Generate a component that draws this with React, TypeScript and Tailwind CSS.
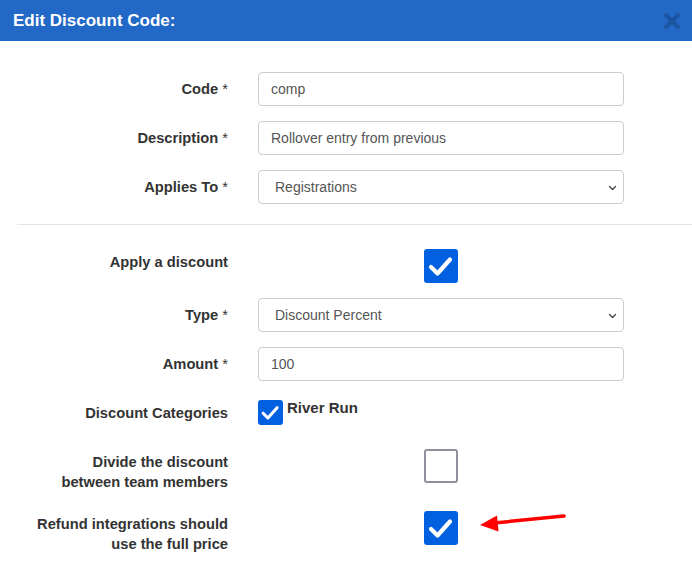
import React from "react";

// Edit Discount Code modal — form rows with right-aligned labels.

function Check({ size = 34 }: { size?: number }) {
  return (
    <span
      className="flex items-center justify-center rounded-[3px] bg-[#0060df]"
      style={{ width: size, height: size }}
    >
      <svg width={size} height={size} viewBox="0 0 34 34" fill="none">
        <path
          d="M7 18 L13.5 24.5 L26 10.5"
          stroke="#fff"
          strokeWidth="4.2"
          strokeLinecap="round"
          strokeLinejoin="round"
        />
      </svg>
    </span>
  );
}

function Empty() {
  return <span className="block h-[34px] w-[34px] rounded-[3px] border-2 border-[#8f8f9d] bg-white" />;
}

function Label({ children, pt = "pt-[7px]", req }: { children: React.ReactNode; pt?: string; req?: boolean }) {
  return (
    <div className={`w-[228px] shrink-0 text-right text-[14.7px] font-bold leading-[20px] text-[#333] ${pt}`}>
      {children}
      {req && <span className="font-normal"> *</span>}
    </div>
  );
}

function Chevron() {
  return (
    <svg className="pointer-events-none absolute right-[6px] top-[13px]" width="9" height="8" viewBox="0 0 9 8" fill="none">
      <path d="M1.5 2.5 L4.5 5.5 L7.5 2.5" stroke="#444" strokeWidth="1.3" strokeLinecap="round" strokeLinejoin="round" />
    </svg>
  );
}

function TextField({ value }: { value: string }) {
  return (
    <div className="flex h-[34px] w-[366px] items-center rounded-[4px] border border-[#ccc] bg-white px-3 text-[14px] text-[#555]">
      {value}
    </div>
  );
}

function SelectField({ value }: { value: string }) {
  return (
    <div className="relative flex h-[34px] w-[366px] items-center rounded-[4px] border border-[#ccc] bg-white pl-4 text-[14px] text-[#555]">
      {value}
      <Chevron />
    </div>
  );
}

export default function App() {
  return (
    <div className="relative h-[573px] w-[692px] overflow-hidden bg-white font-['Liberation_Sans',Arial,sans-serif]">
      <div className="flex h-[41px] items-center justify-between bg-[#2268c6] pl-[13px] pr-[11px]">
        <span className="text-[17px] font-bold text-white">Edit Discount Code:</span>
        <svg width="18" height="18" viewBox="0 0 18 18" fill="none">
          <path d="M3 3 L15 15 M15 3 L3 15" stroke="#1b54a3" strokeWidth="4" strokeLinecap="round" />
        </svg>
      </div>

      <div className="pt-[31px]">
        <div className="mb-[15px] flex gap-[30px]">
          <Label req>Code</Label>
          <TextField value="comp" />
        </div>
        <div className="mb-[15px] flex gap-[30px]">
          <Label req>Description</Label>
          <TextField value="Rollover entry from previous" />
        </div>
        <div className="flex gap-[30px]">
          <Label req>Applies To</Label>
          <SelectField value="Registrations" />
        </div>

        <div className="ml-[17px] mt-[20px] mb-[24px] border-t border-[#e5e5e5]" />

        <div className="mb-[15px] flex gap-[30px]">
          <Label pt="pt-[3px]">Apply a discount</Label>
          <div className="flex w-[366px] justify-center">
            <Check />
          </div>
        </div>
        <div className="mb-[15px] flex gap-[30px]">
          <Label req>Type</Label>
          <SelectField value="Discount Percent" />
        </div>
        <div className="mb-[15px] flex gap-[30px]">
          <Label req>Amount</Label>
          <TextField value="100" />
        </div>
        <div className="flex h-[38px] gap-[30px]">
          <Label>Discount Categories</Label>
          <div className="flex items-start gap-[4px] pt-[4px]">
            <Check size={25} />
            <span className="-mt-[2px] text-[15px] font-bold leading-[20px] text-[#333]">River Run</span>
          </div>
        </div>
        <div className="mt-[15px] flex gap-[30px]">
          <Label pt="pt-[3px]">
            Divide the discount
            <br />
            between team members
          </Label>
          <div className="flex w-[366px] justify-center">
            <Empty />
          </div>
        </div>
        <div className="mt-[19px] flex gap-[30px]">
          <Label pt="pt-[3px]">
            Refund integrations should
            <br />
            use the full price
          </Label>
          <div className="flex w-[366px] justify-center">
            <Check />
          </div>
        </div>
      </div>

      {/* red annotation arrow */}
      <svg className="absolute left-[476px] top-[510px]" width="94" height="24" viewBox="0 0 94 24" fill="none">
        <path d="M88 6 L18 13" stroke="#ff0000" strokeWidth="3.5" strokeLinecap="round" />
        <path d="M4 15 L21 5.5 L22.5 21.5 Z" fill="#ff0000" />
      </svg>
    </div>
  );
}
